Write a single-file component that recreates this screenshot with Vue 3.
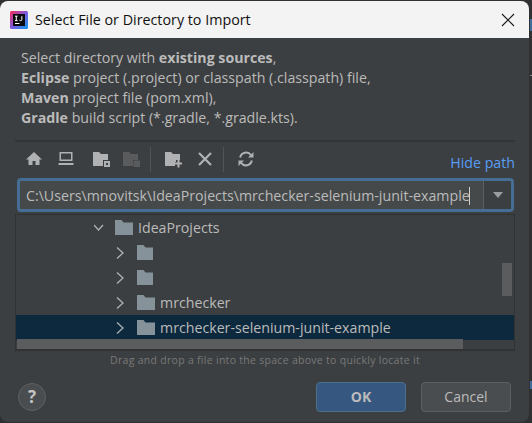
<template>
  <div class="desk">
    <div class="dialog">
      <div class="titlebar">
        <svg class="logo" width="18" height="18" viewBox="0 0 18 18">
          <defs>
            <linearGradient id="lg" x1="0" y1="0" x2="1" y2="1">
              <stop offset="0" stop-color="#fe2857" />
              <stop offset="0.5" stop-color="#7c59e0" />
              <stop offset="1" stop-color="#0c9bf0" />
            </linearGradient>
          </defs>
          <rect width="18" height="18" rx="1.5" fill="url(#lg)" />
          <rect x="3" y="3" width="12" height="12" fill="#0b0b0f" />
          <path d="M5 5.2h2.6M6.3 5.2v4.4M5 9.6h2.6M11.8 5.2v3.4q0 1-1.1 1-.8 0-1.3-.6" fill="none" stroke="#fff" stroke-width="1" />
          <rect x="5" y="12" width="4.5" height="1" fill="#fff" />
        </svg>
        <span class="title">Select File or Directory to Import</span>
        <svg class="close" width="14" height="14" viewBox="0 0 14 14">
          <path d="M1 1l12 12M13 1L1 13" stroke="#1a1a1a" stroke-width="1.1" fill="none" />
        </svg>
      </div>

      <div class="body">
        <div class="desc">
          <div>Select directory with <b>existing sources</b>,</div>
          <div><b>Eclipse</b> project (.project) or classpath (.classpath) file,</div>
          <div><b>Maven</b> project file (pom.xml),</div>
          <div><b>Gradle</b> build script (*.gradle, *.gradle.kts).</div>
        </div>

        <div class="chooser">
          <div class="toolbar">
            <svg class="tb-icon" width="18" height="18" viewBox="0 0 18 18">
              <path d="M9 2L1 9.5h2.5V15h4v-4h3v4h4V9.5H17z" fill="#afb1b3" />
            </svg>
            <svg class="tb-icon" width="18" height="18" viewBox="0 0 18 18">
              <path d="M2.5 2h13v9h-13zM4 3.5v6h10v-6zM1.5 13h15v2h-15z" fill="#afb1b3" fill-rule="evenodd" />
            </svg>
            <svg class="tb-icon shift" width="18" height="18" viewBox="0 0 18 18">
              <path d="M1 2h6l2 2h7v6h-5v6H1z" fill="#afb1b3" />
              <path d="M12 11h6v6h-6zM14 13v2h2v-2z" fill="#afb1b3" fill-rule="evenodd" />
            </svg>
            <svg class="tb-icon unshift" width="18" height="18" viewBox="0 0 18 18">
              <path d="M1 2h6l2 2h7v6h-5v6H1z" fill="#595b5d" />
              <rect x="11.5" y="10.5" width="6.5" height="6.5" fill="#595b5d" />
            </svg>
            <span class="tb-sep"></span>
            <svg class="tb-icon" width="18" height="18" viewBox="0 0 18 18">
              <path d="M1 2h6l2 2h7v6h-4v2h-1v4H1z" fill="#afb1b3" />
              <path d="M14 11v3h-3v2h3v3h2v-3h3v-2h-3v-3z" fill="#afb1b3" transform="translate(-.5 -1.5)" />
            </svg>
            <svg class="tb-icon" width="18" height="18" viewBox="0 0 18 18">
              <path d="M3 3l12 12M15 3L3 15" stroke="#afb1b3" stroke-width="2.2" fill="none" />
            </svg>
            <span class="tb-sep sep-tight"></span>
            <svg class="tb-icon" width="18" height="18" viewBox="0 0 18 18">
              <path d="M3.2 7.5A6 6 0 0 1 14 5.2M14.8 10.5A6 6 0 0 1 4 12.8" stroke="#afb1b3" stroke-width="2" fill="none" />
              <path d="M11 7.5h5.5V2zM7 10.5H1.5V16z" fill="#afb1b3" />
            </svg>
            <span class="hide-path">Hide path</span>
          </div>

          <div class="path-field">
            <div class="path-text">C:\Users\mnovitsk\IdeaProjects\mrchecker-selenium-junit-example<span class="caret"></span></div>
            <div class="path-drop"><span class="drop-arrow"></span></div>
          </div>

          <div class="tree">
            <div v-for="row in rows" :key="row.id" class="row" :class="{ selected: row.selected }">
              <span class="indent" :style="{ width: row.indent + 'px' }"></span>
              <svg class="chevron" width="10" height="12" viewBox="0 0 10 12">
                <path :d="row.open ? 'M0 3l4.5 5 4.5-5' : 'M1 .5l6 5.5-6 5.5'" fill="none" stroke="#afb1b3" stroke-width="1.3" />
              </svg>
              <svg class="folder" :width="row.name ? 18 : 16" height="15" :viewBox="row.name ? '0 0 18 15' : '0 0 16 15'">
                <path d="M0 0h6.5l2 2.5H18V15H0z" fill="#869299" />
              </svg>
              <span class="name">{{ row.name }}</span>
            </div>
            <div class="thumb-v"></div>
            <div class="thumb-h"></div>
          </div>

          <div class="hint">Drag and drop a file into the space above to quickly locate it</div>
        </div>

        <div class="footer">
          <div class="help">?</div>
          <div class="buttons">
            <div class="btn primary">OK</div>
            <div class="btn">Cancel</div>
          </div>
        </div>
      </div>
    </div>
    <div class="edge">
      <span class="edge-a"></span>
      <span class="edge-b"></span>
      <span class="edge-c"></span>
    </div>
  </div>
</template>

<script setup>
const rows = [
  { id: 1, name: "IdeaProjects", indent: 78, open: true },
  { id: 2, name: "", indent: 100 },
  { id: 3, name: "", indent: 100 },
  { id: 4, name: "mrchecker", indent: 100 },
  { id: 5, name: "mrchecker-selenium-junit-example", indent: 100, selected: true },
  { id: 6, name: "mrchecker-selenium-junit", indent: 100 },
];
</script>

<style>
html,
body {
  margin: 0;
  background: #2e3032;
  overflow: hidden;
}
</style>

<style scoped>
.desk {
  display: flex;
  width: 532px;
  height: 423px;
  padding-top: 1px;
  box-sizing: border-box;
  overflow: hidden;
  font-family: "Open Sans", "Noto Sans", sans-serif;
}

.dialog {
  width: 529px;
  height: 421px;
  flex-shrink: 0;
  border-radius: 8px;
  overflow: hidden;
  display: flex;
  flex-direction: column;
  background: #3c3f41;
}

.titlebar {
  height: 37px;
  flex-shrink: 0;
  background: #f3f3f3;
  display: flex;
  align-items: center;
  padding: 0 14px 0 10px;
}

.logo {
  flex-shrink: 0;
}

.title {
  margin-left: 7px;
  font-size: 14.3px;
  color: #111;
  flex: 1;
}

.body {
  flex: 1;
  display: flex;
  flex-direction: column;
  min-height: 0;
  color: #bbbbbb;
}

.desc {
  padding: 10px 0 0 21px;
  height: 102px;
  box-sizing: border-box;
  font-size: 14.2px;
  line-height: 20px;
  flex-shrink: 0;
}

.chooser {
  padding: 0 14px 0 15px;
  flex-shrink: 0;
}

.toolbar {
  border-top: 2px solid #323436;
  height: 38px;
  box-sizing: border-box;
  display: flex;
  align-items: center;
  padding-left: 10px;
  padding-bottom: 2px;
  gap: 14px;
}

.tb-icon {
  flex-shrink: 0;
}

.shift {
  margin-left: 3px;
}

.unshift {
  margin-left: -2px;
}

.tb-sep {
  width: 1px;
  height: 25px;
  margin: 0 -1px 0 -4px;
  background: #515355;
}

.sep-tight {
  margin-left: -5px;
}

.hide-path {
  margin-left: auto;
  margin-top: 7px;
  font-size: 14.2px;
  color: #589df6;
}

.path-field {
  display: flex;
  height: 34px;
  margin: 0 1px 0 2px;
  border: 3px solid #466d94;
  border-radius: 4px;
  box-sizing: border-box;
  background: #45494a;
}

.path-text {
  flex: 1;
  min-width: 0;
  padding-left: 6px;
  font-size: 14.2px;
  line-height: 30px;
  white-space: nowrap;
  overflow: hidden;
}

.caret {
  display: inline-block;
  width: 1px;
  height: 18px;
  margin-left: -1px;
  vertical-align: -4px;
  background: #d0d0d0;
}

.path-drop {
  width: 27px;
  border-left: 1px solid #5c5e60;
  display: flex;
  align-items: center;
  justify-content: center;
  background: #3c3f41;
}

.drop-arrow {
  width: 0;
  height: 0;
  border-left: 5px solid transparent;
  border-right: 5px solid transparent;
  border-top: 6px solid #9a9d9f;
}

.tree {
  position: relative;
  height: 137px;
  margin-top: 2px;
  border: 1px solid #323232;
  border-bottom-width: 2px;
  box-sizing: border-box;
  overflow: hidden;
}

.row {
  height: 25px;
  display: flex;
  align-items: center;
  font-size: 14.2px;
  white-space: nowrap;
}

.row.selected {
  background: #0d293e;
}

.indent {
  flex-shrink: 0;
}

.chevron {
  flex-shrink: 0;
  margin-right: 11px;
}

.folder {
  flex-shrink: 0;
  margin-right: 5px;
}

.thumb-v {
  position: absolute;
  right: 2px;
  top: 48px;
  width: 10px;
  height: 33px;
  background: #5b5c5d;
}

.thumb-h {
  position: absolute;
  left: 1px;
  top: 124px;
  width: 446px;
  height: 10px;
  background: #5b5c5d;
}

.hint {
  margin-top: 2px;
  text-align: center;
  font-size: 10.5px;
  line-height: 14px;
  letter-spacing: 0.29px;
  color: #787878;
}

.footer {
  flex: 1;
  display: flex;
  align-items: center;
  justify-content: space-between;
  padding: 5px 18px 0 18px;
}

.help {
  width: 28px;
  height: 28px;
  border-radius: 50%;
  box-sizing: border-box;
  border: 1px solid #5e6060;
  background: #4a4d4f;
  color: #c4c4c4;
  font-size: 17px;
  font-weight: 700;
  line-height: 26px;
  text-align: center;
}

.buttons {
  display: flex;
  gap: 15px;
}

.btn {
  width: 90px;
  height: 30px;
  box-sizing: border-box;
  border: 1px solid #5e6060;
  border-radius: 4px;
  background: #4a4d4f;
  font-size: 14px;
  line-height: 28px;
  text-align: center;
  color: #bbbbbb;
}

.btn.primary {
  background: #365880;
  border-color: #4c708c;
  font-weight: 700;
}

.edge {
  flex: 1;
  position: relative;
}

.edge-a,
.edge-b,
.edge-c {
  position: absolute;
  right: 0;
  width: 2px;
  background: #3f6d9e;
}

.edge-a {
  top: 18px;
  height: 12px;
}

.edge-b {
  top: 74px;
  height: 1px;
  background: #8a8f94;
}

.edge-c {
  top: 380px;
  height: 8px;
}
</style>
